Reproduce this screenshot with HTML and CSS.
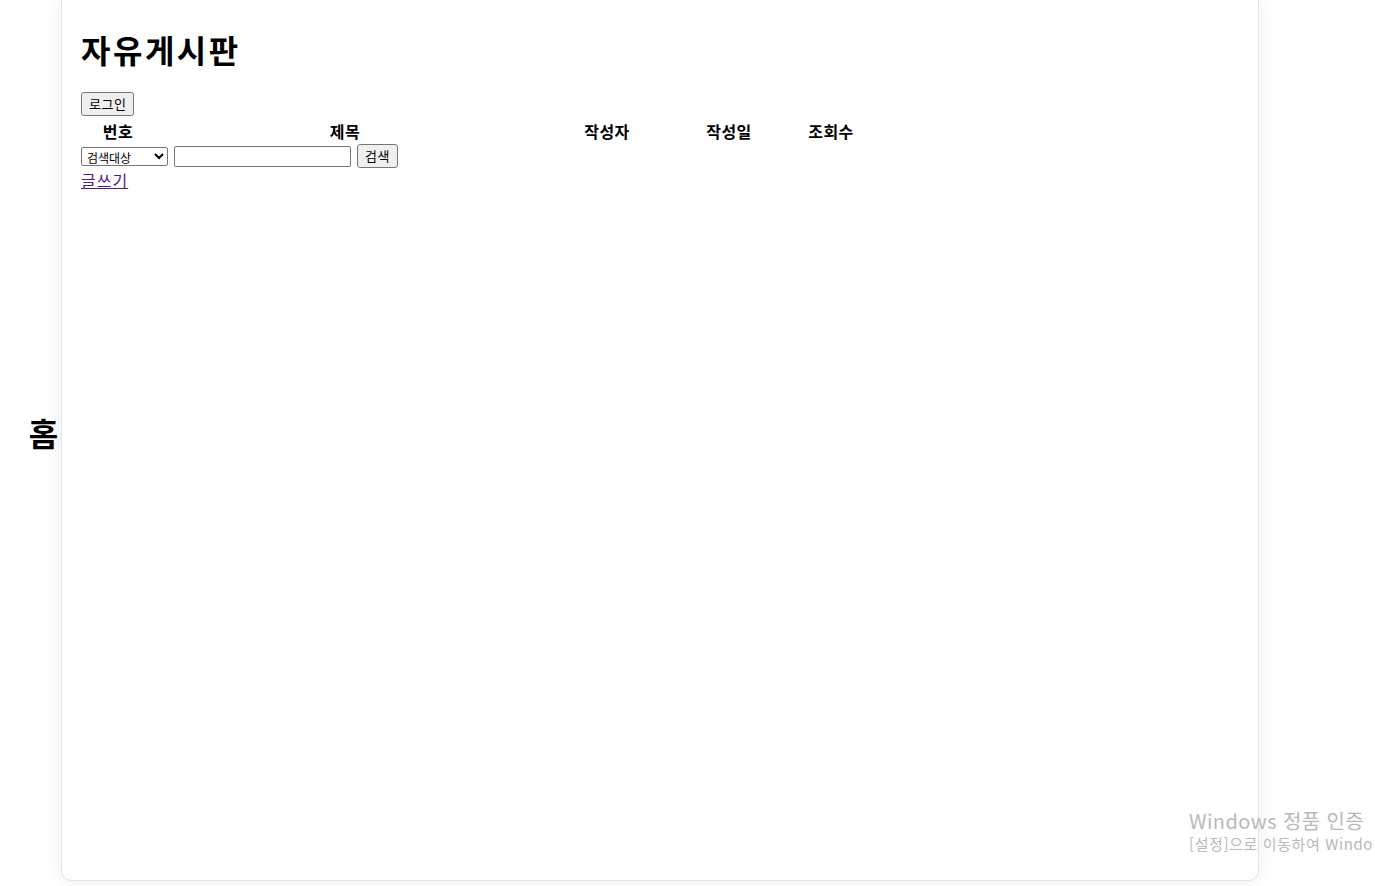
FILE: index.html
```html
<!DOCTYPE html>
<html lang="ko">
<head>
<meta charset="utf-8">
<title>자유게시판</title>
<link rel="stylesheet" href="styles.css">
</head>
<body>
<div class="side"><span class="home">홈</span></div>

<div class="board">
<h1>자유게시판</h1>

<button class="btn" type="button">로그인</button>

<table class="list">
<tr>
<th class="c-no">번호</th>
<th class="c-title">제목</th>
<th class="c-writer">작성자</th>
<th class="c-date">작성일</th>
<th class="c-hit">조회수</th>
</tr>
</table>

<form class="search">
<select class="sel">
<option>검색대상</option>
</select>
<input class="kw" type="text">
<button class="btn" type="button">검색</button>
</form>

<a class="write" href="#">글쓰기</a>
</div>

<div class="winmark">
<div class="wm-1">Windows 정품 인증</div>
<div class="wm-2">[설정]으로 이동하여 Windo</div>
</div>
</body>
</html>
```

FILE: styles.css
```css
/* board page */

html, body
{ margin: 0;
height: 100%;
overflow: hidden;
}

body
{ display: flex;
align-items: flex-start;
font-family: "Noto Sans CJK KR", "Noto Sans", sans-serif;
background-color: #fff;
color: #000;
}

div.side
{ width: 61px;
height: 864px;
display: flex;
align-items: center;
justify-content: center;
flex-shrink: 0;
}

span.home
{ font-size: 32px;
font-weight: bold;
line-height: 34px;
margin-left: 26px;
}

div.board
{ width: 1198px;
height: 881px;
box-sizing: border-box;
padding: 0 19px;
border: 1px solid #e4e4e4;
border-top: none;
border-radius: 0 0 10px 10px;
box-shadow: 0 0 18px rgba(0, 0, 0, 0.07);
flex-shrink: 0;
}

div.board h1
{ margin: 30px 0 22px;
font-size: 32px;
line-height: 38px;
letter-spacing: 2.5px;
font-weight: bold;
}

.btn
{ font-family: "Noto Sans CJK KR", sans-serif;
font-size: 13px;
line-height: 16px;
height: 24px;
padding: 1px 7px;
border: 1px solid #767676;
border-radius: 3px;
background-color: #efefef;
color: #000;
letter-spacing: 0.5px;
}

table.list
{ border-spacing: 2px;
margin: 2px 0 0 0;
}

table.list th
{ font-size: 16px;
line-height: 20px;
padding: 1px;
font-weight: bold;
letter-spacing: 0.5px;
}

th.c-no { width: 68px; }
th.c-title { width: 378px; }
th.c-writer { width: 138px; }
th.c-date { width: 98px; }
th.c-hit { width: 98px; }

form.search
{ display: flex;
align-items: flex-start;
gap: 6px;
margin: 0;
height: 24px;
}

select.sel
{ width: 87px;
height: 19px;
box-sizing: border-box;
font-family: "Noto Sans CJK KR", sans-serif;
font-size: 12px;
line-height: 15px;
padding: 0 0 0 1px;
margin-top: 3px;
border: 1px solid #767676;
border-radius: 2px;
background-color: #fff;
}

input.kw
{ width: 177px;
height: 21px;
box-sizing: border-box;
border: 1px solid #767676;
border-radius: 2px;
padding: 1px 2px;
margin-top: 2px;
}

form.search .btn
{ width: 41px;
}

a.write
{ display: inline-block;
margin-top: 0;
font-size: 16px;
line-height: 22px;
letter-spacing: 1px;
color: #551a8b;
}

/* activation watermark, over the page */

div.winmark
{ position: absolute;
left: 1189px;
top: 808px;
white-space: nowrap;
color: #b9b9b9;
font-family: "Noto Sans CJK KR", sans-serif;
}

div.wm-1
{ font-size: 20px;
line-height: 26px;
letter-spacing: 0.4px;
}

div.wm-2
{ font-size: 15px;
line-height: 20px;
letter-spacing: 0.6px;
}
```
